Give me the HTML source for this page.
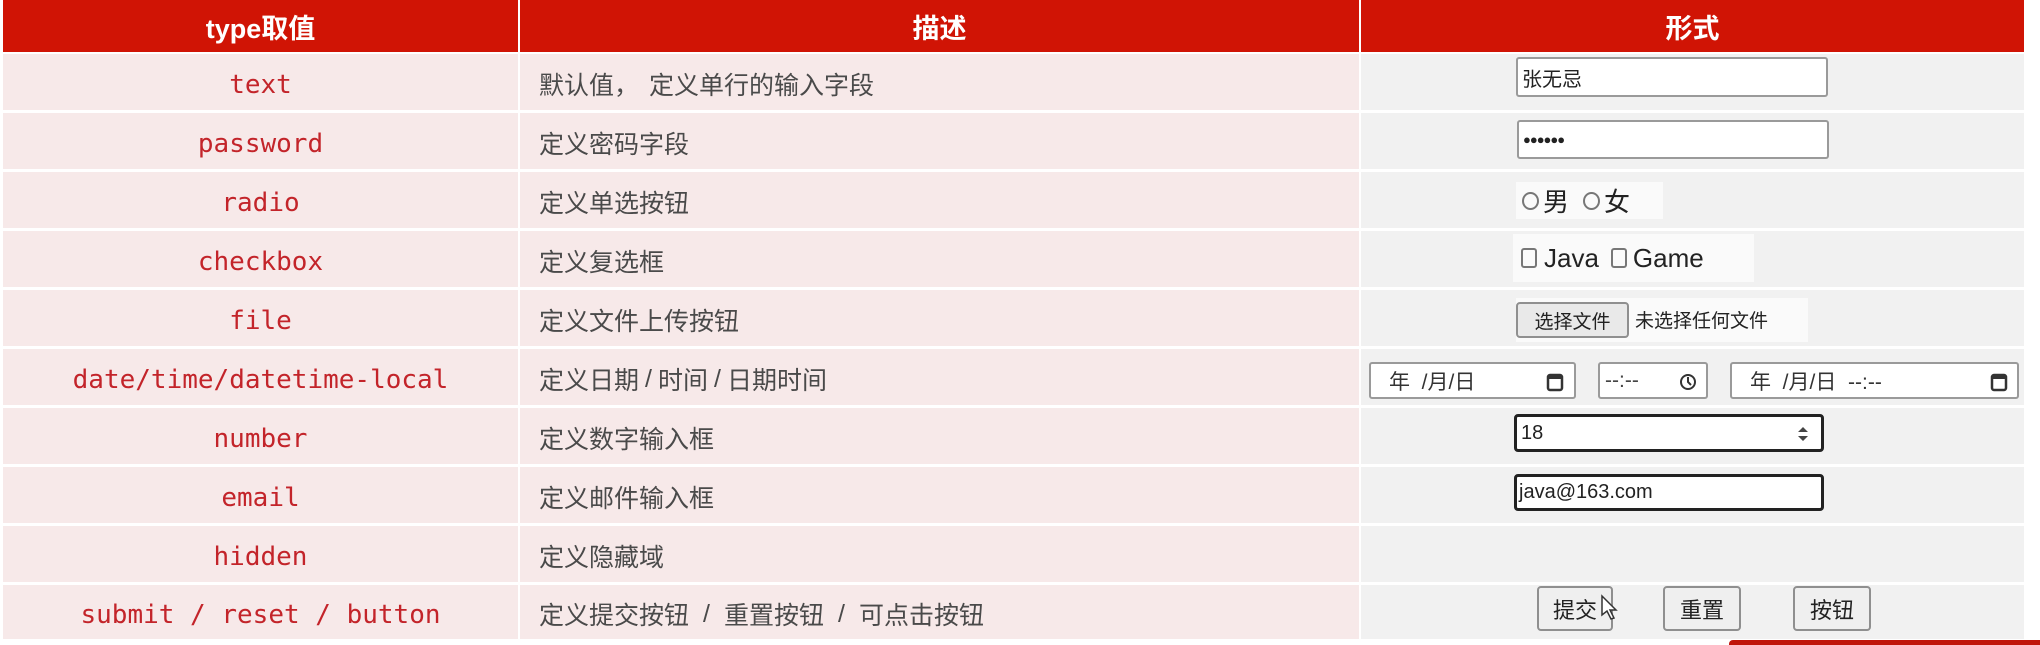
<!DOCTYPE html>
<html><head><meta charset="utf-8"><style>
*{margin:0;padding:0;box-sizing:border-box}
body{width:2040px;height:645px;background:#fff;position:relative;overflow:hidden;font-family:"Liberation Sans","Noto Sans CJK SC",sans-serif}
.a{position:absolute}
.hd{background:#d01405;color:#fff;font-weight:bold;font-size:27px;display:flex;align-items:center;justify-content:center;top:0;height:52px}
.c1{background:#f7e9e9;color:#c3242a;font-family:"DejaVu Sans Mono","Noto Sans CJK SC",monospace;font-size:26px;display:flex;align-items:center;justify-content:center;padding-top:6px}
.c2{background:#f7e9e9;color:#4a4a4a;font-size:25px;display:flex;align-items:center;padding-left:19px;padding-top:4px}
.c3{background:#f1f1f1}
.s{margin:0 6px}
.inp{background:#fff;border:2px solid #9a9a9a;border-radius:3px;font-size:20px;color:#222;display:flex;align-items:center;padding-left:4px}
.btn{background:#efefef;border:2px solid #8f8f8f;border-radius:4px;font-size:22px;color:#222;display:flex;align-items:center;justify-content:center}
</style></head><body>
<div class="a hd" style="left:3px;width:515px">type取值</div>
<div class="a hd" style="left:520px;width:839px">描述</div>
<div class="a hd" style="left:1361px;width:663px">形式</div>

<div class="a c1" style="left:3px;top:54px;width:515px;height:56px">text</div>
<div class="a c2" style="left:520px;top:54px;width:839px;height:56px">默认值，<span style="margin-left:10px"></span>定义单行的输入字段</div>
<div class="a c3" style="left:1361px;top:54px;width:663px;height:56px"></div>

<div class="a c1" style="left:3px;top:113px;width:515px;height:56px">password</div>
<div class="a c2" style="left:520px;top:113px;width:839px;height:56px">定义密码字段</div>
<div class="a c3" style="left:1361px;top:113px;width:663px;height:56px"></div>

<div class="a c1" style="left:3px;top:172px;width:515px;height:56px">radio</div>
<div class="a c2" style="left:520px;top:172px;width:839px;height:56px">定义单选按钮</div>
<div class="a c3" style="left:1361px;top:172px;width:663px;height:56px"></div>

<div class="a c1" style="left:3px;top:231px;width:515px;height:56px">checkbox</div>
<div class="a c2" style="left:520px;top:231px;width:839px;height:56px">定义复选框</div>
<div class="a c3" style="left:1361px;top:231px;width:663px;height:56px"></div>

<div class="a c1" style="left:3px;top:290px;width:515px;height:56px">file</div>
<div class="a c2" style="left:520px;top:290px;width:839px;height:56px">定义文件上传按钮</div>
<div class="a c3" style="left:1361px;top:290px;width:663px;height:56px"></div>

<div class="a c1" style="left:3px;top:349px;width:515px;height:56px">date/time/datetime-local</div>
<div class="a c2" style="left:520px;top:349px;width:839px;height:56px">定义日期<span class="s">/</span>时间<span class="s">/</span>日期时间</div>
<div class="a c3" style="left:1361px;top:349px;width:663px;height:56px"></div>

<div class="a c1" style="left:3px;top:408px;width:515px;height:56px">number</div>
<div class="a c2" style="left:520px;top:408px;width:839px;height:56px">定义数字输入框</div>
<div class="a c3" style="left:1361px;top:408px;width:663px;height:56px"></div>

<div class="a c1" style="left:3px;top:467px;width:515px;height:56px">email</div>
<div class="a c2" style="left:520px;top:467px;width:839px;height:56px">定义邮件输入框</div>
<div class="a c3" style="left:1361px;top:467px;width:663px;height:56px"></div>

<div class="a c1" style="left:3px;top:526px;width:515px;height:56px">hidden</div>
<div class="a c2" style="left:520px;top:526px;width:839px;height:56px">定义隐藏域</div>
<div class="a c3" style="left:1361px;top:526px;width:663px;height:56px"></div>

<div class="a c1" style="left:3px;top:585px;width:515px;height:54px">submit / reset / button</div>
<div class="a c2" style="left:520px;top:585px;width:839px;height:54px">定义提交按钮<span class="s" style="margin:0 14px">/</span>重置按钮<span class="s" style="margin:0 14px">/</span>可点击按钮</div>
<div class="a c3" style="left:1361px;top:585px;width:663px;height:54px"></div>

<div class="a inp" style="left:1516px;top:57px;width:312px;height:40px">张无忌</div>
<div class="a inp" style="left:1517px;top:120px;width:312px;height:39px;font-size:13px;letter-spacing:-1px">●●●●●●</div>
<div class="a" style="left:1516px;top:182px;width:147px;height:37px;background:#fafafa;font-size:26px;color:#222;display:flex;align-items:center;padding-left:6px">
<span style="display:inline-block;width:17px;height:18px;border:2px solid #777;border-radius:50%;margin-right:4px"></span>男<span style="display:inline-block;width:17px;height:18px;border:2px solid #777;border-radius:50%;margin:0 4px 0 14px"></span>女</div>
<div class="a" style="left:1513px;top:234px;width:241px;height:48px;background:#fafafa;font-size:26px;color:#222;display:flex;align-items:center;padding-left:8px">
<span style="display:inline-block;width:16px;height:20px;border:2px solid #777;border-radius:3px;margin-right:7px"></span>Java<span style="display:inline-block;width:16px;height:20px;border:2px solid #777;border-radius:3px;margin:0 6px 0 12px"></span>Game</div>
<div class="a" style="left:1516px;top:298px;width:292px;height:44px;background:#fafafa"></div>
<div class="a btn" style="left:1516px;top:302px;width:113px;height:36px;font-size:19px;background:#e9e9e9">选择文件</div>
<div class="a" style="left:1635px;top:306px;font-size:19px;color:#222">未选择任何文件</div>

<div class="a inp" style="left:1369px;top:362px;width:207px;height:37px;font-size:21px;color:#333;padding-left:18px">年&nbsp;&nbsp;/月/日<svg style="position:absolute;right:10px;top:8px" width="18" height="20" viewBox="0 0 18 20"><rect x="2" y="3" width="14" height="15" rx="2" fill="none" stroke="#333" stroke-width="2.5"/><rect x="2" y="3" width="14" height="4" fill="#333"/></svg></div>
<div class="a inp" style="left:1598px;top:362px;width:110px;height:37px;font-size:21px;color:#444;padding-left:5px">--:--<svg style="position:absolute;right:9px;top:9px" width="18" height="18" viewBox="0 0 18 18"><circle cx="9" cy="9" r="7" fill="none" stroke="#333" stroke-width="2"/><path d="M9 4v5l3 3" fill="none" stroke="#333" stroke-width="2"/></svg></div>
<div class="a inp" style="left:1730px;top:362px;width:289px;height:37px;font-size:21px;color:#333;padding-left:18px">年&nbsp;&nbsp;/月/日&nbsp;&nbsp;--:--<svg style="position:absolute;right:9px;top:8px" width="18" height="20" viewBox="0 0 18 20"><rect x="2" y="3" width="14" height="15" rx="2" fill="none" stroke="#333" stroke-width="2.5"/><rect x="2" y="3" width="14" height="4" fill="#333"/></svg></div>

<div class="a inp" style="left:1514px;top:414px;width:310px;height:38px;border:3px solid #222;border-radius:4px;font-size:20px">18<svg style="position:absolute;right:12px;top:8px" width="12" height="18" viewBox="0 0 12 18"><path d="M6 2L11 7H1Z M6 16L11 11H1Z" fill="#444"/></svg></div>
<div class="a inp" style="left:1514px;top:474px;width:310px;height:37px;border:3px solid #222;border-radius:4px;font-size:20px;padding-left:2px">java@163.com</div>

<div class="a btn" style="left:1537px;top:586px;width:76px;height:45px">提交</div>
<svg class="a" style="left:1600px;top:594px" width="18" height="26" viewBox="0 0 18 26"><path d="M2 2v19l5-4 4 8 3-1-4-8h6Z" fill="#fff" stroke="#333" stroke-width="1.5"/></svg>
<div class="a btn" style="left:1663px;top:586px;width:78px;height:45px">重置</div>
<div class="a btn" style="left:1793px;top:586px;width:78px;height:45px">按钮</div>

<div class="a" style="left:1729px;top:640px;width:311px;height:5px;background:#c0150a;border-radius:4px 0 0 0"></div>
</body></html>
